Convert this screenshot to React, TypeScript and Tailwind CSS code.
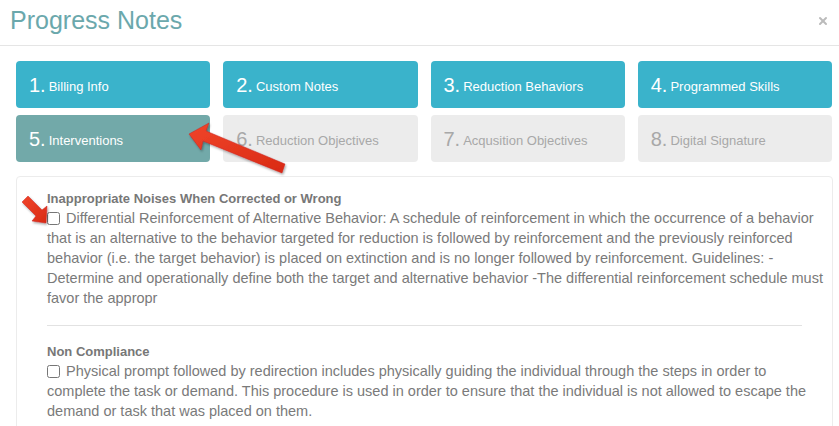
import React from 'react';
import { X } from 'lucide-react';

const steps = [
  { n: '1.', label: 'Billing Info', kind: 'active' },
  { n: '2.', label: 'Custom Notes', kind: 'active' },
  { n: '3.', label: 'Reduction Behaviors', kind: 'active' },
  { n: '4.', label: 'Programmed Skills', kind: 'active' },
  { n: '5.', label: 'Interventions', kind: 'current' },
  { n: '6.', label: 'Reduction Objectives', kind: 'disabled' },
  { n: '7.', label: 'Acqusition Objectives', kind: 'disabled' },
  { n: '8.', label: 'Digital Signature', kind: 'disabled' },
];

const kindClass: Record<string, string> = {
  active: 'bg-[#3ab3cb] text-white',
  current: 'bg-[#72a9a9] text-white',
  disabled: 'bg-[#ececec] text-[#a8a8a8]',
};

function Intervention({ title, text }: { title: string; text: string }) {
  return (
    <div>
      <div className="text-[13px] font-bold text-[#777] leading-[18px]">{title}</div>
      <label className="block text-[14.5px] leading-[20px] text-[#7a7a7a]">
        <input type="checkbox" className="w-[13px] h-[13px] mr-[6px] align-[-2px] accent-white" />
        {text}
      </label>
    </div>
  );
}

function App() {
  return (
    <div className="relative w-[839px] h-[426px] overflow-hidden bg-white font-['Liberation_Sans',Arial,sans-serif]">
      <div className="flex items-center justify-between h-[46px] border-b border-[#e5e5e5] pl-[10px] pr-[10px]">
        <h1 className="text-[25px] leading-none text-[#6ba8ac] -mt-[4px]">Progress Notes</h1>
        <X className="w-[12px] h-[12px] text-[#bbb] -mt-[3px]" strokeWidth={4} />
      </div>

      <div className="px-[16px] pt-[15px] pr-[7px]">
        <div className="grid grid-cols-4 gap-x-[13px] gap-y-[7px]">
          {steps.map((s) => (
            <div
              key={s.n}
              className={`h-[47px] rounded-[4px] flex items-center px-[13px] ${kindClass[s.kind]}`}
            >
              <span className="text-[20px] leading-none mr-[3px]">{s.n}</span>
              <span className="text-[13px] leading-none mt-[3px]">{s.label}</span>
            </div>
          ))}
        </div>

        <div className="mt-[14px] w-[817px] h-[300px] border border-[#ececec] rounded-[4px] pl-[30px] pr-[8px] pt-[13px]">
          <Intervention
            title="Inappropriate Noises When Corrected or Wrong"
            text="Differential Reinforcement of Alternative Behavior: A schedule of reinforcement in which the occurrence of a behavior that is an alternative to the behavior targeted for reduction is followed by reinforcement and the previously reinforced behavior (i.e. the target behavior) is placed on extinction and is no longer followed by reinforcement. Guidelines: - Determine and operationally define both the target and alternative behavior -The differential reinforcement schedule must favor the appropr"
          />
          <hr className="mt-[17px] mb-[17px] mr-[22px] border-[#e2e2e2]" />
          <Intervention
            title="Non Compliance"
            text="Physical prompt followed by redirection includes physically guiding the individual through the steps in order to complete the task or demand. This procedure is used in order to ensure that the individual is not allowed to escape the demand or task that was placed on them."
          />
        </div>
      </div>

      {/* annotation arrows */}
      <svg className="absolute left-0 top-0 pointer-events-none" width="839" height="426">
        <defs>
          <linearGradient id="ar" x1="0" y1="0" x2="1" y2="1">
            <stop offset="0" stopColor="#f0452a" />
            <stop offset="1" stopColor="#d92a14" />
          </linearGradient>
          <filter id="sh" x="-20%" y="-20%" width="140%" height="140%">
            <feDropShadow dx="1" dy="1.5" stdDeviation="1" floodColor="#000" floodOpacity="0.35" />
          </filter>
        </defs>
        <g filter="url(#sh)">
          <path d="M189 134 L209 123 L206 131 L285 164 L282 173 L203 141 L201 150 Z" fill="url(#ar)" stroke="#c22" strokeWidth="0.5" />
          <path d="M46 223 L32 221 L36 216 L22 202 L28 196 L42 210 L47 206 Z" fill="url(#ar)" stroke="#c22" strokeWidth="0.5" />
        </g>
      </svg>
    </div>
  );
}

export default App;
